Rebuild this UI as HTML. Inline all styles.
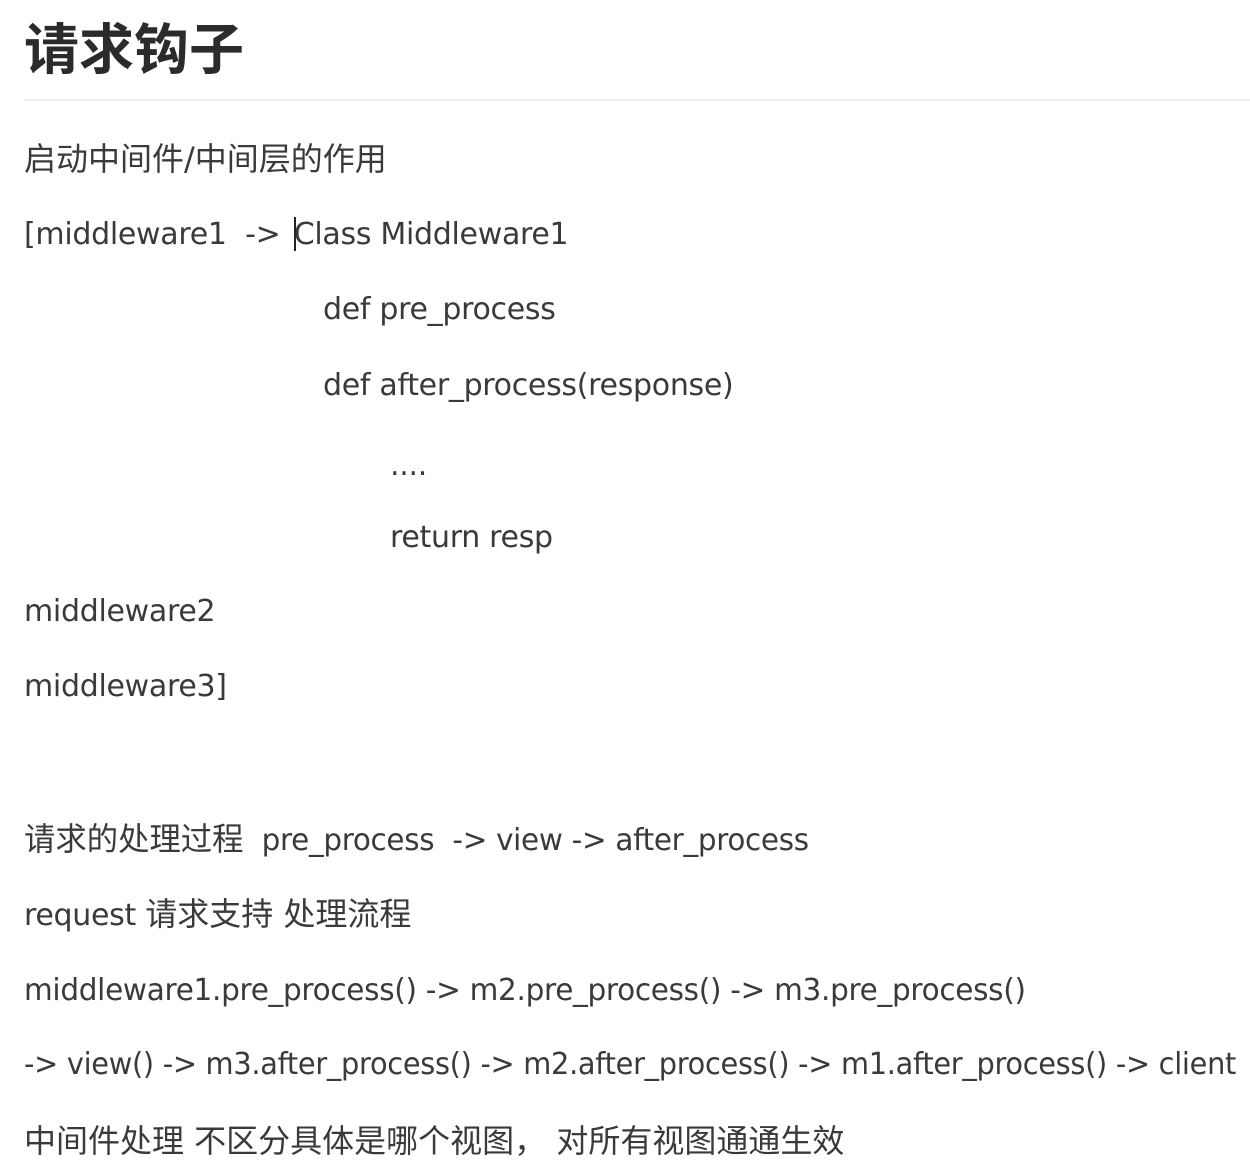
<!DOCTYPE html>
<html><head><meta charset="utf-8"><style>
html,body{margin:0;padding:0;background:#fff;width:1250px;height:1176px;overflow:hidden;position:relative}
.l{position:absolute;left:24px;font-family:"DejaVu Sans","Noto Sans CJK SC",sans-serif;font-size:30px;color:#3a3a3a;line-height:40px;white-space:pre;letter-spacing:-0.3px;transform-origin:0 0}
.c{font-size:32px;letter-spacing:0}
h1{position:absolute;left:24px;top:16px;margin:0;font-family:"Liberation Sans","Noto Sans CJK SC",sans-serif;font-weight:bold;font-size:55px;line-height:68px;color:#2b2b2b}
.hr{position:absolute;left:24px;top:99px;width:1226px;height:2px;background:#f0f0f0}
.cur{display:inline-block;width:2px;height:34px;background:#222;vertical-align:-7px;margin-right:-2px}
</style></head><body>
<h1>请求钩子</h1>
<div class="hr"></div>
<div class="l" style="top:139px"><span class="c">启动中间件/中间层的作用</span></div>
<div class="l" style="top:215px">[middleware1  -&gt; <span class="cur" style="margin-left:4px"></span>Class Middleware1</div>
<div class="l" style="top:290px;left:323px">def pre_process</div>
<div class="l" style="top:366px;left:323px">def after_process(response)</div>
<div class="l" style="top:446px;left:390px">....</div>
<div class="l" style="top:518px;left:390px">return resp</div>
<div class="l" style="top:592px">middleware2</div>
<div class="l" style="top:667px">middleware3]</div>
<div class="l" style="top:819px;transform:scaleX(0.98)"><span class="c">请求的处理过程</span>  pre_process  -&gt; view -&gt; after_process</div>
<div class="l" style="top:894px">request <span class="c">请求支持 处理流程</span></div>
<div class="l" style="top:971px;transform:scaleX(0.983)">middleware1.pre_process() -&gt; m2.pre_process() -&gt; m3.pre_process()</div>
<div class="l" style="top:1045px;transform:scaleX(0.96)">-&gt; view() -&gt; m3.after_process() -&gt; m2.after_process() -&gt; m1.after_process() -&gt; client</div>
<div class="l" style="top:1121px"><span class="c">中间件处理 不区分具体是哪个视图， 对所有视图通通生效</span></div>
</body></html>
